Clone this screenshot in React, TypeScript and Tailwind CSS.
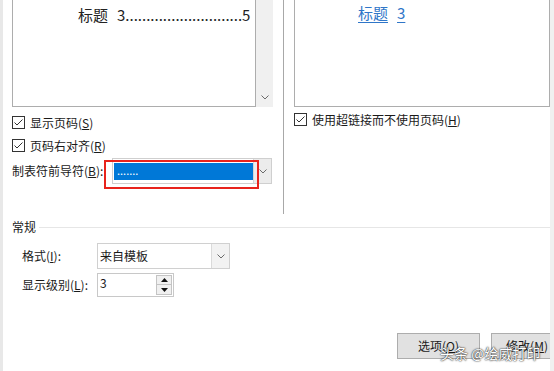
import React from 'react'

function Chevron() {
  return (
    <svg width="8" height="5" viewBox="0 0 8 5">
      <path d="M0.5 0.5 L4 4 L7.5 0.5" fill="none" stroke="#6b6b6b" strokeWidth="1" />
    </svg>
  )
}

function CheckBox() {
  return (
    <span className="w-[13px] h-[13px] border border-[#333] bg-white flex items-center justify-center shrink-0">
      <svg width="11" height="11" viewBox="0 0 11 11">
        <path d="M1.5 5.5 L4 8 L9.5 2.5" fill="none" stroke="#333" strokeWidth="1" />
      </svg>
    </span>
  )
}

function Triangle({ up }: { up?: boolean }) {
  return (
    <svg width="7" height="4" viewBox="0 0 7 4">
      <path d={up ? 'M0 4 L3.5 0 L7 4 Z' : 'M0 0 L3.5 4 L7 0 Z'} fill="#111" />
    </svg>
  )
}

export default function App() {
  return (
    <div className="w-[554px] h-[371px] flex bg-white overflow-hidden font-['Noto_Sans_CJK_SC',sans-serif] text-[12px] text-[#1a1a1a]">
      <div className="w-[3px] bg-[#e8e8e8] shrink-0" />

      <div className="w-[547px] shrink-0 flex flex-col relative overflow-hidden">
        {/* Preview panes */}
        <div className="h-[214px] flex pl-[9px] shrink-0">
          <div className="w-[261px] flex flex-col">
            <div className="flex h-[107px]">
              <div className="w-[244px] border-x border-b border-[#adadad] pt-[5px] pl-[65px] pr-[9px]">
                <div className="flex whitespace-nowrap text-[15px] leading-[20px] text-[#222]">
                  <span className="shrink-0">标题</span>
                  <span className="ml-[9px] shrink-0">3</span>
                  <span className="shrink-0">............................</span>
                  <span className="ml-auto shrink-0">5</span>
                </div>
              </div>
              <div className="w-[17px] bg-[#f0f0f0] flex items-end justify-center pb-[7px]">
                <Chevron />
              </div>
            </div>

            <div className="mt-[4px] h-[23px] flex items-center gap-[5px]">
              <CheckBox />
              <span>显示页码(<span className="underline">S</span>)</span>
            </div>
            <div className="h-[23px] flex items-center gap-[5px]">
              <CheckBox />
              <span>页码右对齐(<span className="underline">R</span>)</span>
            </div>

            <div className="mt-[1px] h-[26px] flex items-center">
              <span className="w-[100px]">制表符前导符(<span className="underline">B</span>):</span>
              <div className="relative w-[160px] h-[26px] border border-[#cfcfcf] bg-white flex">
                <div className="flex-1 pl-[1px] pt-[4px] pb-[3px]">
                  <div className="h-[17px] bg-[#0078d7] text-white text-[11px] leading-[15px] pl-[3px]">
                    .......
                  </div>
                </div>
                <div className="w-[18px] bg-[#ececec] border-l border-[#d6d6d6] flex items-center justify-center">
                  <Chevron />
                </div>
                <div className="absolute left-[-9px] top-[1px] w-[155px] h-[29px] border-2 border-[#e8231c]" />
              </div>
            </div>
          </div>

          <div className="ml-[10px] w-px bg-[#a8a8a8]" />

          <div className="ml-[10px] w-[256px] flex flex-col">
            <div className="h-[107px] border-x border-b border-[#adadad] pt-[3px] pl-[63px]">
              <span className="text-[15px] leading-[20px] text-[#2f76c8] underline underline-offset-[3px]">
                标题<span className="ml-[9px]">3</span>
              </span>
            </div>
            <div className="mt-[6px] h-[13px] flex items-center gap-[5px]">
              <CheckBox />
              <span>使用超链接而不使用页码(<span className="underline">H</span>)</span>
            </div>
          </div>
        </div>

        {/* 常规 */}
        <div className="mt-[4px] h-[18px] flex items-center pl-[9px] shrink-0">
          <span>常规</span>
          <div className="flex-1 h-px bg-[#e6e6e6] ml-[3px]" />
        </div>

        <div className="mt-[7px] h-[26px] flex items-center pl-[19px] shrink-0">
          <span className="w-[75px]">格式(<span className="underline">I</span>):</span>
          <div className="w-[133px] h-[26px] border border-[#d0d0d0] bg-white flex">
            <div className="flex-1 pl-[2px] flex items-center">来自模板</div>
            <div className="w-[18px] bg-[#f2f2f2] border-l border-[#dadada] flex items-center justify-center">
              <Chevron />
            </div>
          </div>
        </div>

        <div className="mt-[4px] h-[24px] flex items-center pl-[19px] shrink-0">
          <span className="w-[75px]">显示级别(<span className="underline">L</span>):</span>
          <div className="w-[77px] h-[24px] border border-[#c8c8c8] bg-white flex">
            <div className="flex-1 pl-[2px] pt-[1px] leading-[16px]">3</div>
            <div className="w-[16px] mr-[1px] my-[1px] flex flex-col">
              <div className="h-[10px] bg-[#f0f0f0] border border-[#c4c4c4] flex items-center justify-center">
                <Triangle up />
              </div>
              <div className="h-[10px] bg-[#f0f0f0] border border-t-0 border-[#c4c4c4] flex items-center justify-center">
                <Triangle />
              </div>
            </div>
          </div>
        </div>

        {/* Buttons */}
        <div className="mt-[36px] h-[26px] flex pl-[394px] gap-[11px] shrink-0">
          <div className="w-[83px] h-[26px] shrink-0 bg-[#e1e1e1] border border-[#adadad] flex items-center justify-center">
            选项(<span className="underline">O</span>)
          </div>
          <div className="w-[72px] h-[26px] shrink-0 bg-[#e1e1e1] border border-[#adadad] flex items-center justify-center">
            修改(<span className="underline">M</span>)
          </div>
        </div>

        <div className="absolute left-[437px] top-[344px] text-[14px] leading-[18px] text-white whitespace-nowrap [text-shadow:0_0_2px_#222,0_0_1px_#222]">
          头条 @绘威打印
        </div>
      </div>

      <div className="flex-1 bg-[#f0f0f0]" />
    </div>
  )
}
